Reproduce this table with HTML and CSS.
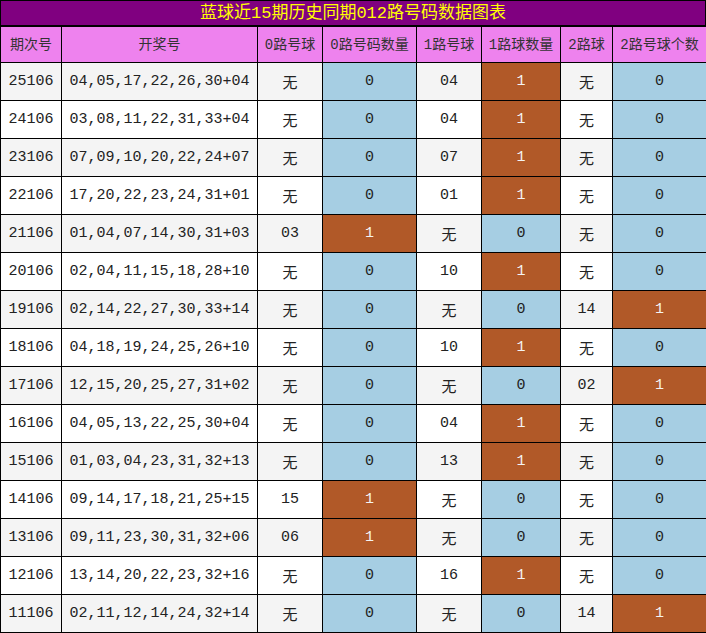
FILE: index.html
```html
<!DOCTYPE html>
<html lang="zh">
<head>
<meta charset="utf-8">
<title>蓝球近15期历史同期012路号码数据图表</title>
<link rel="stylesheet" href="styles.css">
</head>
<body>
<div class="title">蓝球近15期历史同期012路号码数据图表</div>
<table class="grid">
<colgroup>
<col class="c1"><col class="c2"><col class="c3"><col class="c4"><col class="c5"><col class="c6"><col class="c7"><col class="c8">
</colgroup>
<thead>
<tr><th>期次号</th><th>开奖号</th><th>0路号球</th><th>0路号码数量</th><th>1路号球</th><th>1路球数量</th><th>2路球</th><th>2路号球个数</th></tr>
</thead>
<tbody>
<tr><td>25106</td><td>04,05,17,22,26,30+04</td><td class="cj">无</td><td class="b">0</td><td>04</td><td class="r">1</td><td class="cj">无</td><td class="b">0</td></tr>
<tr><td>24106</td><td>03,08,11,22,31,33+04</td><td class="cj">无</td><td class="b">0</td><td>04</td><td class="r">1</td><td class="cj">无</td><td class="b">0</td></tr>
<tr><td>23106</td><td>07,09,10,20,22,24+07</td><td class="cj">无</td><td class="b">0</td><td>07</td><td class="r">1</td><td class="cj">无</td><td class="b">0</td></tr>
<tr><td>22106</td><td>17,20,22,23,24,31+01</td><td class="cj">无</td><td class="b">0</td><td>01</td><td class="r">1</td><td class="cj">无</td><td class="b">0</td></tr>
<tr><td>21106</td><td>01,04,07,14,30,31+03</td><td>03</td><td class="r">1</td><td class="cj">无</td><td class="b">0</td><td class="cj">无</td><td class="b">0</td></tr>
<tr><td>20106</td><td>02,04,11,15,18,28+10</td><td class="cj">无</td><td class="b">0</td><td>10</td><td class="r">1</td><td class="cj">无</td><td class="b">0</td></tr>
<tr><td>19106</td><td>02,14,22,27,30,33+14</td><td class="cj">无</td><td class="b">0</td><td class="cj">无</td><td class="b">0</td><td>14</td><td class="r">1</td></tr>
<tr><td>18106</td><td>04,18,19,24,25,26+10</td><td class="cj">无</td><td class="b">0</td><td>10</td><td class="r">1</td><td class="cj">无</td><td class="b">0</td></tr>
<tr><td>17106</td><td>12,15,20,25,27,31+02</td><td class="cj">无</td><td class="b">0</td><td class="cj">无</td><td class="b">0</td><td>02</td><td class="r">1</td></tr>
<tr><td>16106</td><td>04,05,13,22,25,30+04</td><td class="cj">无</td><td class="b">0</td><td>04</td><td class="r">1</td><td class="cj">无</td><td class="b">0</td></tr>
<tr><td>15106</td><td>01,03,04,23,31,32+13</td><td class="cj">无</td><td class="b">0</td><td>13</td><td class="r">1</td><td class="cj">无</td><td class="b">0</td></tr>
<tr><td>14106</td><td>09,14,17,18,21,25+15</td><td>15</td><td class="r">1</td><td class="cj">无</td><td class="b">0</td><td class="cj">无</td><td class="b">0</td></tr>
<tr><td>13106</td><td>09,11,23,30,31,32+06</td><td>06</td><td class="r">1</td><td class="cj">无</td><td class="b">0</td><td class="cj">无</td><td class="b">0</td></tr>
<tr><td>12106</td><td>13,14,20,22,23,32+16</td><td class="cj">无</td><td class="b">0</td><td>16</td><td class="r">1</td><td class="cj">无</td><td class="b">0</td></tr>
<tr><td>11106</td><td>02,11,12,14,24,32+14</td><td class="cj">无</td><td class="b">0</td><td class="cj">无</td><td class="b">0</td><td>14</td><td class="r">1</td></tr>
</tbody>
</table>
</body>
</html>
```

FILE: styles.css
```css
html, body {
  margin: 0;
  padding: 0;
  background: #ffffff;
}

body {
  font-family: "Liberation Mono", "Noto Sans CJK SC", monospace;
  width: 706px;
}

.title {
  box-sizing: border-box;
  width: 706px;
  height: 26px;
  padding-top: 1px;
  border: 1px solid #000;
  background: #800080;
  color: #ffff00;
  font-size: 17px;
  line-height: 23px;
  text-align: center;
  overflow: hidden;
}

.grid {
  border-collapse: collapse;
  table-layout: fixed;
  width: 706px;
}

.c1 { width: 61px; }
.c2 { width: 196px; }
.c3 { width: 65px; }
.c4 { width: 94px; }
.c5 { width: 65px; }
.c6 { width: 79px; }
.c7 { width: 52px; }
.c8 { width: 94px; }

.grid th,
.grid td {
  border: 1px solid #000;
  padding: 0;
  text-align: center;
  vertical-align: middle;
  white-space: nowrap;
  overflow: hidden;
}

.grid th {
  height: 35px;
  background: #ee82ee;
  color: #333;
  font-weight: normal;
  font-size: 14px;
  line-height: 18px;
}

.grid td {
  height: 37px;
  font-size: 15px;
  line-height: 18px;
  color: #222;
}

.grid tbody tr:nth-child(odd) td {
  background: #f4f4f4;
}

.grid tbody tr:nth-child(even) td {
  background: #ffffff;
}

.grid tbody tr td.cj {
  height: 31px;
  padding-top: 6px;
}

.grid tbody tr td.b {
  background: #a6cee3;
}

.grid tbody tr td.r {
  background: #b15928;
  color: #f4f4f4;
}
```
